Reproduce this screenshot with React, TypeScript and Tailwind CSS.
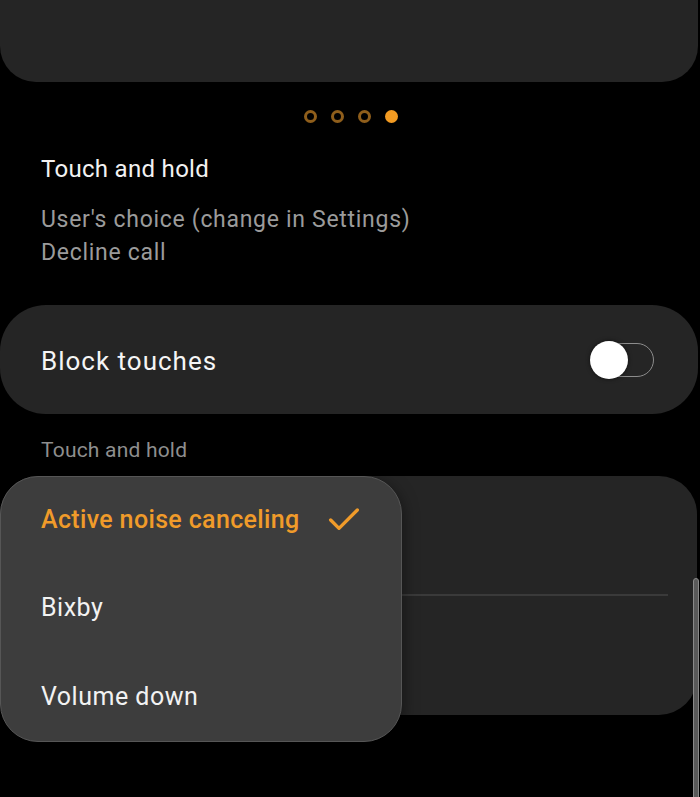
import { Check } from "lucide-react";

const font = { fontFamily: "Roboto, 'Noto Sans', sans-serif" };

function PageDots() {
    return (
        <div className="mt-[28px] flex justify-center gap-[14px] pl-[2px]">
            <span className="h-[13px] w-[13px] rounded-full border-[3px] border-[#8f5e1b]" />
            <span className="h-[13px] w-[13px] rounded-full border-[3px] border-[#8f5e1b]" />
            <span className="h-[13px] w-[13px] rounded-full border-[3px] border-[#8f5e1b]" />
            <span className="h-[13px] w-[13px] rounded-full bg-[#f39b22]" />
        </div>
    );
}

function Toggle() {
    return (
        <div className="relative h-[38px] w-[64px]">
            <div className="absolute right-0 top-[2px] h-[34px] w-[57px] rounded-full border-[1.5px] border-[#8c8c8c]" />
            <div className="absolute left-0 top-0 h-[38px] w-[38px] rounded-full bg-white shadow-[0_0_4px_rgba(0,0,0,0.6)]" />
        </div>
    );
}

const options = [
    { label: "Active noise canceling", selected: true },
    { label: "Bixby", selected: false },
    { label: "Volume down", selected: false },
];

export default function App() {
    return (
        <div className="relative h-[797px] w-[700px] overflow-hidden bg-black" style={font}>
            {/* card cut off at the top */}
            <div className="mr-[2px] h-[82px] rounded-b-[36px] bg-[#252525]" />

            <PageDots />

            <div className="mt-[30px] px-[41px]">
                <p className="text-[24px] leading-[32px] tracking-[0.3px] text-[#f2f2f2]">Touch and hold</p>
                <div className="mt-[18px] text-[23px] leading-[33px] tracking-[0.7px] text-[#9b9b9b]">
                    <p>User's choice (change in Settings)</p>
                    <p>Decline call</p>
                </div>
            </div>

            <div className="mr-[2px] mt-[36px] flex h-[109px] items-center justify-between rounded-[46px] bg-[#252525] pl-[41px] pr-[44px]">
                <span className="pt-[3px] text-[26px] tracking-[1px] text-[#f5f5f5]">Block touches</span>
                <Toggle />
            </div>

            <p className="mt-[22px] px-[41px] text-[21px] leading-[28px] tracking-[0.2px] text-[#8e8e8e]">Touch and hold</p>

            <div className="relative mr-[3px] mt-[12px]">
                <div className="h-[239px] rounded-[38px] bg-[#252525] pt-[118px]">
                    <div className="ml-[41px] mr-[29px] h-[2px] bg-[#3a3a3a]" />
                </div>

                {/* dropdown menu */}
                <div className="absolute left-0 top-0 h-[266px] w-[402px] rounded-[38px] border border-[#565656] bg-[#3d3d3d] shadow-[0_4px_16px_rgba(0,0,0,0.5)]">
                    {options.map((o, i) => (
                        <div
                            key={o.label}
                            className={`flex items-center justify-between pl-[40px] pr-[37px] ${i === 0 ? "h-[86px]" : "h-[89px]"}`}
                        >
                            <span
                                className={
                                    o.selected
                                        ? "text-[25px] font-medium tracking-[0.35px] text-[#f09b2a]"
                                        : "text-[25px] tracking-[0.5px] text-[#f2f2f2]"
                                }
                            >
                                {o.label}
                            </span>
                            {o.selected && <Check size={40} strokeWidth={2} color="#f09b2a" />}
                        </div>
                    ))}
                </div>
            </div>

            {/* scrollbar */}
            <div className="absolute right-[1px] top-[578px] h-[240px] w-[6px] rounded-full border border-[#8a8a8a] bg-[#5a5a5a]" />
        </div>
    );
}
